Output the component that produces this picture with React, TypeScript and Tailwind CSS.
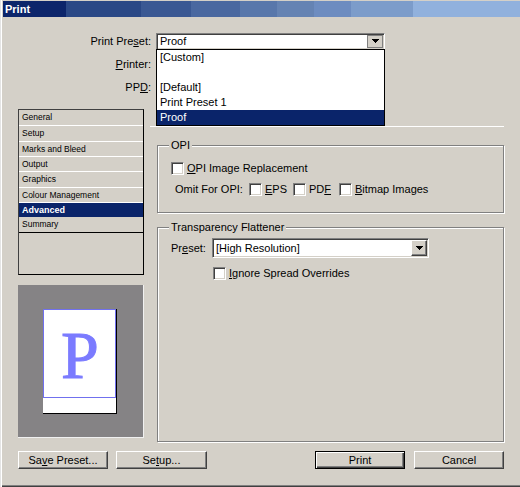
import React from "react";

const Arrow = () => (
  <svg width="7" height="4" viewBox="0 0 7 4" shapeRendering="crispEdges">
    <path d="M0 0h7v1h-1v1h-1v1h-1v1h-1v-1h-1v-1h-1v-1h-1z" fill="#000" />
  </svg>
);

const Check = () => (
  <span className="inline-block w-[13px] h-[13px] shrink-0 bg-white border border-t-[#808080] border-l-[#808080] border-b-white border-r-white shadow-[inset_1px_1px_0_#404040,inset_-1px_-1px_0_#d4d0c8]" />
);

const sunken =
  "bg-white border border-t-[#808080] border-l-[#808080] border-b-white border-r-white shadow-[inset_1px_1px_0_#404040,inset_-1px_-1px_0_#d4d0c8]";

const raised =
  "bg-[#d4d0c8] border border-t-white border-l-white border-b-[#404040] border-r-[#404040] shadow-[inset_-1px_-1px_0_#808080]";

function Select({ value, open, w, h }: { value: string; open?: boolean; w: string; h: string }) {
  return (
    <div className={`${w} ${h} ${sunken} flex items-stretch p-[1px]`}>
      <div className="flex-1 flex items-center pl-[2px] text-[11px] leading-none">{value}</div>
      {open ? (
        <div className="w-[16px] bg-[#d4d0c8] border border-[#808080] flex items-center justify-center">
          <Arrow />
        </div>
      ) : (
        <div className={`w-[16px] ${raised} flex items-center justify-center`}>
          <Arrow />
        </div>
      )}
    </div>
  );
}

function Group({
  label,
  className,
  children,
}: {
  label: string;
  className: string;
  children: React.ReactNode;
}) {
  return (
    <div
      className={`relative border border-[#808080] shadow-[inset_1px_1px_0_#fff,1px_1px_0_#fff] ${className}`}
    >
      <span className="absolute left-[11px] top-[-8px] px-[2px] h-[14px] leading-[14px] bg-[#d4d0c8] text-[11px]">
        {label}
      </span>
      {children}
    </div>
  );
}

function Btn({ children, w, def }: { children: React.ReactNode; w: string; def?: boolean }) {
  const cls = def
    ? "bg-[#d4d0c8] border border-black shadow-[inset_1px_1px_0_#fff,inset_-1px_-1px_0_#404040,inset_-2px_-2px_0_#808080]"
    : raised;
  return (
    <div className={`${w} h-[18px] ${cls} flex items-center justify-center text-[11px] leading-none`}>
      {children}
    </div>
  );
}

const navItems: { label: string; h: string; sep: boolean; active?: boolean }[] = [
  { label: "General", h: "h-[15px]", sep: false },
  { label: "Setup", h: "h-[16px]", sep: true },
  { label: "Marks and Bleed", h: "h-[15px]", sep: true },
  { label: "Output", h: "h-[15px]", sep: true },
  { label: "Graphics", h: "h-[16px]", sep: true },
  { label: "Colour Management", h: "h-[15px]", sep: true },
  { label: "Advanced", h: "h-[15px]", sep: true, active: true },
  { label: "Summary", h: "h-[16px]", sep: false },
];

export default function App() {
  return (
    <div className="relative w-[520px] h-[487px] bg-[#d4d0c8] text-black font-['Liberation_Sans',Arial,sans-serif] shadow-[inset_1px_0_0_#e4e4e4,inset_2px_0_0_#fff,inset_0_-1px_0_#404040,inset_0_-2px_0_#808080] flex flex-col overflow-hidden">
      {/* Title bar */}
      <div className="mt-[1px] ml-[3px] w-[517px] h-[16px] shrink-0 flex items-center pl-[2px] bg-[linear-gradient(to_right,#0c256b_0_63px,#2a4886_63px_138px,#3a5893_138px_188px,#4a68a0_188px_237px,#5877ab_237px_274px,#6583b3_274px_311px,#6d8cc0_311px_348px,#7c9cca_348px_410px,#91b1dd_410px)]">
        <span className="text-white font-bold text-[11px] leading-none">Print</span>
      </div>

      {/* Top form */}
      <div className="mt-[16px] flex flex-col gap-[7px]">
        <div className="flex items-center h-[16px]">
          <div className="w-[152px] text-right text-[11px] leading-none pr-[1px]">
            Print Pre<u>s</u>et:
          </div>
          <div className="ml-[4px]">
            <Select value="Proof" open w="w-[229px]" h="h-[17px]" />
          </div>
        </div>
        <div className="flex items-center h-[16px]">
          <div className="w-[152px] text-right text-[11px] leading-none pr-[1px]">
            <u>P</u>rinter:
          </div>
          <div className="ml-[4px]">
            <Select value="" w="w-[229px]" h="h-[17px]" />
          </div>
        </div>
        <div className="flex items-center h-[16px]">
          <div className="w-[152px] text-right text-[11px] leading-none pr-[1px]">
            PP<u>D</u>:
          </div>
          <div className="ml-[4px]">
            <Select value="" w="w-[229px]" h="h-[17px]" />
          </div>
        </div>
      </div>

      {/* Body */}
      <div className="mt-[14px] pl-[18px] flex gap-[6px]">
        {/* Left column */}
        <div className="w-[126px] flex flex-col">
          <div className="h-[166px] border border-t-[#404040] border-l-[#404040] border-b-black border-r-black flex flex-col">
            {navItems.map((it) => (
              <div
                key={it.label}
                className={`${it.h} shrink-0 flex items-center pl-[3px] text-[8.5px] leading-none ${
                  it.sep ? "border-t border-t-white" : ""
                } ${it.active ? "bg-[#0a246a] text-white font-bold text-[9px]" : ""} ${
                  it.label === "Summary" ? "border-b border-b-black" : ""
                }`}
              >
                {it.label}
              </div>
            ))}
          </div>
          <div className="mt-[10px] h-[153px] bg-[#858385] border-r border-b border-r-[#f0f0f0] border-b-[#f0f0f0] pl-[25px] pt-[24px]">
            <div className="w-[74px] h-[105px] bg-white border-r border-b border-black">
              <div className="w-[73px] h-[89px] border border-[#7070ee] pl-[17px] pt-[11px]">
                <div className="font-['Liberation_Serif',serif] text-[68px] leading-none text-[#7b7bff] [-webkit-text-stroke:1px_#7b7bff]">P</div>
              </div>
            </div>
          </div>
        </div>

        {/* Right column */}
        <div className="w-[354px] flex flex-col pt-[17px]">
          <div className="h-px bg-white" />
          <Group label="OPI" className="mt-[18px] ml-[7px] w-[347px] h-[68px]">
            <div className="pt-[16px] pl-[13px] flex flex-col gap-[8px]">
              <div className="flex items-center h-[13px]">
                <Check />
                <span className="ml-[3px] text-[11px] leading-none">
                  <u>O</u>PI Image Replacement
                </span>
              </div>
              <div className="flex items-center h-[13px]">
                <span className="ml-[4px] w-[74px] text-[11px] leading-none">Omit For OPI:</span>
                <Check />
                <span className="ml-[3px] w-[28px] text-[11px] leading-none">
                  <u>E</u>PS
                </span>
                <Check />
                <span className="ml-[3px] w-[30px] text-[11px] leading-none">
                  PD<u>F</u>
                </span>
                <Check />
                <span className="ml-[3px] text-[11px] leading-none">
                  <u>B</u>itmap Images
                </span>
              </div>
            </div>
          </Group>
          <Group label="Transparency Flattener" className="mt-[14px] ml-[7px] w-[347px] h-[215px]">
            <div className="pt-[10px] pl-[13px] flex flex-col">
              <div className="flex items-center h-[20px]">
                <span className="w-[41px] text-[11px] leading-none">
                  Pr<u>e</u>set:
                </span>
                <Select value="[High Resolution]" w="w-[217px]" h="h-[20px]" />
              </div>
              <div className="mt-[9px] ml-[42px] flex items-center h-[13px]">
                <Check />
                <span className="ml-[3px] text-[11px] leading-none">
                  <u>I</u>gnore Spread Overrides
                </span>
              </div>
            </div>
          </Group>
        </div>
      </div>

      {/* Buttons */}
      <div className="mt-[9px] pl-[18px] pr-[16px] flex items-center">
        <Btn w="w-[90px]">
          Sa<u>v</u>e Preset...
        </Btn>
        <div className="ml-[8px]">
          <Btn w="w-[91px]">
            Se<u>t</u>up...
          </Btn>
        </div>
        <div className="flex-1" />
        <Btn w="w-[90px]" def>
          Print
        </Btn>
        <div className="ml-[9px]">
          <Btn w="w-[90px]">Cancel</Btn>
        </div>
      </div>

      {/* Open dropdown list */}
      <div className="absolute left-[156px] top-[49px] w-[229px] h-[77px] bg-white border border-black flex flex-col">
        {["[Custom]", "", "[Default]", "Print Preset 1"].map((t, i) => (
          <div key={i} className="h-[15px] shrink-0 flex items-center pl-[3px] text-[11px] leading-none">
            {t}
          </div>
        ))}
        <div className="h-[15px] shrink-0 flex items-center pl-[3px] text-[11px] leading-none bg-[#0a246a] text-white">
          Proof
        </div>
      </div>
    </div>
  );
}
